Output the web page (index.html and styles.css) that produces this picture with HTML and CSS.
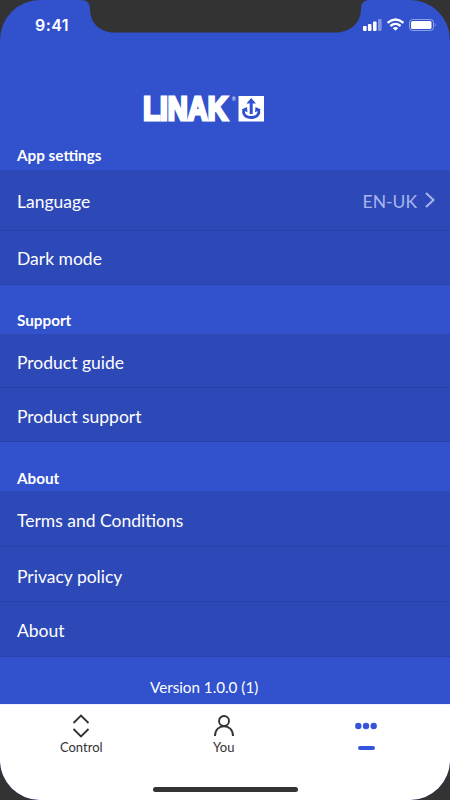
FILE: index.html
```html
<!DOCTYPE html>
<html lang="en">
<head>
<meta charset="utf-8">
<title>LINAK settings</title>
<link rel="stylesheet" href="styles.css">
</head>
<body>
<main class="phone">
  <header class="top">
    <svg class="notch" width="290" height="33" viewBox="0 0 290 33"><path d="M0 0C7 0 10 3 10 9C10 23 20 32.500 34 32.500H256C270 32.500 281 23 281 9C281 3 284 0 290 0Z" fill="#333"/></svg>
    <div class="status">
      <span class="time">9:41</span>
      <svg class="indicators" width="74" height="16" viewBox="0 0 74 16" fill="#fff">
        <rect x="1" y="9" width="3.600" height="5" rx="1"/><rect x="5.900" y="7" width="3.600" height="7" rx="1"/><rect x="11" y="4.500" width="3.600" height="9.500" rx="1"/><rect x="16" y="2" width="3.600" height="12" rx="1" opacity=".4"/>
        <g fill="none" stroke="#fff" stroke-width="2.300"><path d="M25.500 5.900Q33.500 -.9 41.500 5.900"/><path d="M28.400 9Q33.500 4.700 38.600 9"/></g><path d="M30.700 11Q33.500 8.900 36.300 11L33.500 13.700Z"/>
        <rect x="47.500" y="2.500" width="24" height="11" rx="3" fill="none" stroke="#fff" stroke-opacity=".45"/><rect x="49" y="4" width="20.500" height="8" rx="1.500"/><path d="M72.800 6Q74.500 8 72.800 10Z" opacity=".5"/>
      </svg>
    </div>
    <svg class="logo" width="122" height="28" viewBox="0 0 122 28">
      <text class="wordmark" transform="translate(.2 25.200) scale(.85 1)">LINAK</text>
      <text class="reg" x="88.800" y="6">®</text>
      <rect x="95.500" y="1" width="25.500" height="25.500" fill="#fff"/>
      <g fill="none" stroke="#3151cd"><path d="M108.200 19V6" stroke-width="3"/><path d="M101.300 14.500C98.800 19 103 22.500 108.200 22.500S117.600 19 115.100 14.500" stroke-width="2.800"/></g>
      <path d="M108.200 3L113 8.500H103.400ZM98.500 14.500L104 12L104.500 17.300ZM118 14.500L112.500 12L112 17.300Z" fill="#3151cd"/>
    </svg>
  </header>

  <section>
    <h2 class="first">App settings</h2>
    <ul class="list app">
      <li>Language<span class="value">EN-UK<svg width="10" height="16" viewBox="0 0 10 16"><path d="M1 1L8.500 8L1 15" fill="none" stroke="currentColor" stroke-width="2"/></svg></span></li>
      <li>Dark mode</li>
    </ul>
  </section>
  <section>
    <h2>Support</h2>
    <ul class="list support"><li>Product guide</li><li>Product support</li></ul>
  </section>
  <section>
    <h2 class="last">About</h2>
    <ul class="list about"><li>Terms and Conditions</li><li>Privacy policy</li><li>About</li></ul>
  </section>
  <p class="version">Version 1.0.0 (1)</p>

  <nav class="tabs">
    <div class="tab control">
      <svg width="18" height="24" viewBox="0 0 18 24"><path d="M1.500 9L9 1.500L16.500 9M1.500 15L9 22.500L16.500 15" fill="none" stroke="#333" stroke-width="1.900"/></svg>
      <span>Control</span>
    </div>
    <div class="tab">
      <svg width="22" height="24" viewBox="0 0 22 24"><g fill="none" stroke="#333" stroke-width="1.900"><circle cx="11" cy="7" r="5"/><path d="M2 22C2 9 20 9 20 22"/></g></svg>
      <span>You</span>
    </div>
    <div class="tab active">
      <svg width="22" height="24" viewBox="0 0 22 24" fill="#3455db"><circle cx="3.300" cy="12" r="3.200"/><circle cx="11" cy="12" r="3.200"/><circle cx="18.700" cy="12" r="3.200"/></svg>
      <i class="marker"></i>
    </div>
    <div class="home"></div>
  </nav>
</main>
</body>
</html>
```
FILE: styles.css
```css
* { box-sizing: border-box; }
body { margin: 0; background: #333; font-family: Lato, sans-serif; color: #fff; }
.phone { width: 450px; height: 800px; overflow: hidden; border-radius: 40px; background: #3151cd; display: flex; flex-direction: column; }
.top { position: relative; height: 143px; flex: none; }
.notch { position: absolute; left: 80px; top: 0; }
.status { position: relative; display: flex; justify-content: space-between; align-items: center; height: 50px; padding: 0 14px 0 35px; }
.time { font: 600 16px/20px Inter, sans-serif; letter-spacing: .4px; }
.indicators { display: block; }
.logo { display: block; margin: 45px 0 0 143px; overflow: visible; }
.wordmark { font: bold 32.500px "Liberation Sans", sans-serif; fill: #fff; stroke: #fff; stroke-width: 3px; }
.reg { font: 5px Lato, sans-serif; fill: #fff; }
h2 { margin: 0; height: 49px; padding: 25px 17px 0; font-size: 15.250px; line-height: 20px; font-weight: 700; }
h2.first { height: 27px; padding-top: 2px; }
h2.last { padding-top: 26px; }
.list { margin: 0; padding: 0; list-style: none; background: #2d48b7; display: grid; font-size: 17.500px; }
.list li { display: flex; align-items: center; justify-content: space-between; padding: 0 15px 0 17px; border-bottom: 1px solid #2942aa; }
.app { grid-template-rows: 61px 54px; }
.app li:first-child { padding-top: 2px; }
.app li:last-child { padding-top: 2px; }
.support { grid-template-rows: 54px 54px; }
.support li { padding-top: 3px; }
.about { grid-template-rows: 56px 55px 55px; }
.about li { padding-top: 4px; }
.about li:last-child { padding-top: 2px; }
.value { display: flex; align-items: center; gap: 8px; color: #a7b5ed; }
.value svg { position: relative; top: -1px; }
.version { margin: 0; height: 47px; padding: 20px 0 0 150px; font-size: 15.200px; line-height: 20px; flex: none; }
.tabs { position: relative; flex: 1; display: grid; grid-template-columns: repeat(3, 142.500px); padding: 9px 0 0 10px; background: #fff; color: #333; border-top: 1px solid #eef2ff; }
.tab { display: flex; flex-direction: column; align-items: center; font-size: 13px; line-height: 16px; }
.tab span { margin-top: 1px; }
.marker { width: 17px; height: 4px; border-radius: 2px; background: #3455db; margin-top: 8px; }
.home { position: absolute; left: 153px; top: 82px; width: 145px; height: 5px; border-radius: 3px; background: #333; }
```
